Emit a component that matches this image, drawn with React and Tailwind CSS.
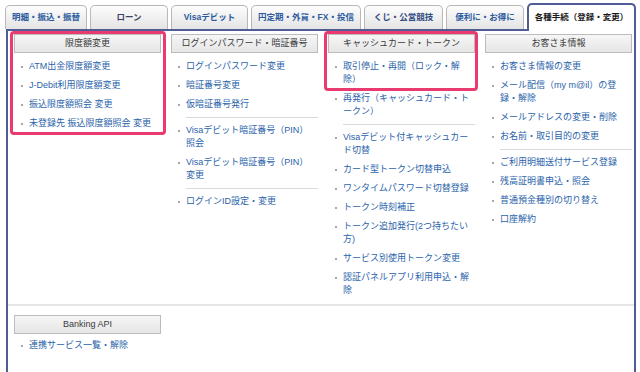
import React from 'react';

// Bank "各種手続" menu — tab strip + four link columns

const tabs = [
  { label: '明細・振込・振替', w: 'w-[82px]', color: 'text-[#2c5b9e]' },
  { label: 'ローン', w: 'w-[78px]', color: 'text-[#3a4360]' },
  { label: 'Visaデビット', w: 'w-[77px]', color: 'text-[#2c5b9e]' },
  { label: '円定期・外貨・FX・投信', w: 'w-[110px]', color: 'text-[#2c5b9e]' },
  { label: 'くじ・公営競技', w: 'w-[79px]', color: 'text-[#2f4a80]' },
  { label: '便利に・お得に', w: 'w-[78px]', color: 'text-[#2c5b9e]' },
];

const columns = [
  {
    title: '限度額変更',
    highlight: 'all',
    groups: [
      [
        ['ATM出金限度額変更'],
        ['J-Debit利用限度額変更'],
        ['振込限度額照会 変更'],
        ['未登録先 振込限度額照会 変更'],
      ],
    ],
  },
  {
    title: 'ログインパスワード・暗証番号',
    groups: [
      [['ログインパスワード変更'], ['暗証番号変更'], ['仮暗証番号発行']],
      [
        ['Visaデビット暗証番号（PIN）', '照会'],
        ['Visaデビット暗証番号（PIN）', '変更'],
      ],
      [['ログインID設定・変更']],
    ],
  },
  {
    title: 'キャッシュカード・トークン',
    highlight: 'first',
    groups: [
      [
        ['取引停止・再開（ロック・解', '除）'],
        ['再発行（キャッシュカード・ト', 'ークン）'],
      ],
      [
        ['Visaデビット付キャッシュカー', 'ド切替'],
        ['カード型トークン切替申込'],
        ['ワンタイムパスワード切替登録'],
        ['トークン時刻補正'],
        ['トークン追加発行(2つ持ちたい', '方)'],
        ['サービス別使用トークン変更'],
        ['認証パネルアプリ利用申込・解', '除'],
      ],
    ],
  },
  {
    title: 'お客さま情報',
    groups: [
      [
        ['お客さま情報の変更'],
        ['メール配信（my m@il）の登', '録・解除'],
        ['メールアドレスの変更・削除'],
        ['お名前・取引目的の変更'],
      ],
      [
        ['ご利用明細送付サービス登録'],
        ['残高証明書申込・照会'],
        ['普通預金種別の切り替え'],
        ['口座解約'],
      ],
    ],
  },
];

function Header({ children }) {
  return (
    <div className="h-[19px] border border-[#bcbcbc] bg-gradient-to-b from-[#f6f6f6] to-[#e6e6e6] text-center text-[9px] leading-[17px] text-[#3a3a3a]">
      {children}
    </div>
  );
}

function Item({ lines }) {
  return (
    <li className="flex -ml-[8px]">
      <span className="flex h-[13px] items-center mr-[6px]">
        <span className="block w-[2px] h-[2px] rounded-full bg-[#8a8a8a]" />
      </span>
      <a href="#" className="text-[#2a63aa] whitespace-nowrap leading-[13px]">
        {lines.map((l, i) => (
          <span key={i} className="block">
            {l}
          </span>
        ))}
      </a>
    </li>
  );
}

function Column({ col }) {
  return (
    <div className="relative w-[147px] shrink-0">
      {col.highlight === 'all' && (
        <div className="absolute -left-[4px] -right-[5px] -top-[3px] -bottom-[5px] border-[3px] border-[#ea3b70] rounded-[4px] pointer-events-none" />
      )}
      {col.highlight === 'first' && (
        <div className="absolute -left-[4px] -right-[3px] -top-[3px] h-[60px] border-[3px] border-[#ea3b70] rounded-[4px] pointer-events-none" />
      )}
      <Header>{col.title}</Header>
      <div className="mt-[7px] pl-[15px] text-[9px]">
        {col.groups.map((g, gi) => (
          <ul
            key={gi}
            className={
              gi === 0
                ? 'flex flex-col gap-[6px]'
                : 'flex flex-col gap-[6px] mt-[6px] border-t border-[#dadada] pt-[6px]'
            }
          >
            {g.map((lines, i) => (
              <Item key={i} lines={lines} />
            ))}
          </ul>
        ))}
      </div>
    </div>
  );
}

export default function App() {
  return (
    <div className="w-[640px] h-[372px] overflow-hidden bg-white font-['Liberation_Sans','Noto_Sans_CJK_JP',sans-serif]">
      {/* Tab strip */}
      <div className="flex items-end gap-[3px] pl-[5px] pt-[3px]">
        {tabs.map((t) => (
          <div
            key={t.label}
            className={`${t.w} h-[24px] shrink-0 flex items-center justify-center rounded-t-[5px] border border-b-0 border-[#b8b8b8] bg-gradient-to-b from-[#fdfdfd] to-[#e4e4e4] text-[8.5px] font-bold ${t.color}`}
          >
            {t.label}
          </div>
        ))}
        <div className="relative z-10 -mb-[2px] w-[109px] h-[28px] shrink-0 flex items-center justify-center pb-[2px] rounded-t-[5px] border-2 border-b-0 border-[#4f5d94] bg-white text-[8.5px] font-bold text-[#1a1a1a]">
          各種手続（登録・変更）
        </div>
      </div>

      {/* Panel */}
      <div className="ml-[6px] w-[630px] border-2 border-b-0 border-[#4f5d94] bg-white pb-[40px]">
        <div className="flex items-start gap-[10px] pl-[6px] pt-[3px] pb-[7px]">
          {columns.map((c) => (
            <Column key={c.title} col={c} />
          ))}
        </div>
        <div className="border-t-2 border-[#e6e6e6] pl-[6px] pt-[9px]">
          <div className="w-[147px]">
            <Header>Banking API</Header>
            <ul className="mt-[5px] pl-[15px] text-[9px]">
              <Item lines={['連携サービス一覧・解除']} />
            </ul>
          </div>
        </div>
      </div>
    </div>
  );
}
